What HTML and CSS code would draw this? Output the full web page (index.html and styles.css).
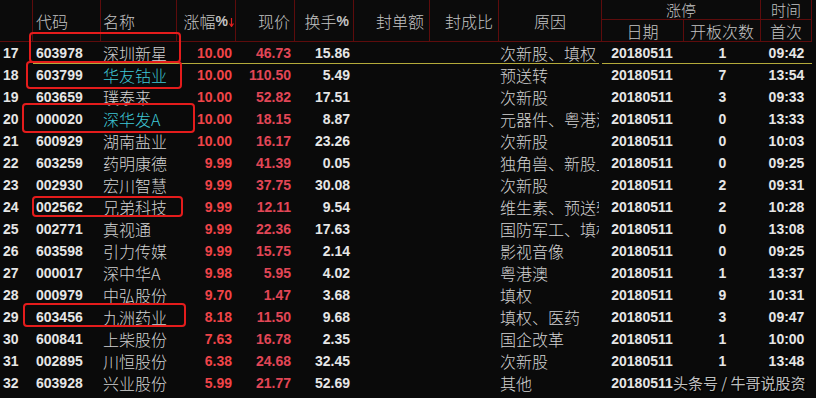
FILE: index.html
```html
<!DOCTYPE html>
<html lang="zh">
<head>
<meta charset="utf-8">
<title>涨停列表</title>
<link rel="stylesheet" href="styles.css">
</head>
<body>
<div class="board">
  <div class="head">
    <div class="h h-idx span2"></div>
    <div class="h h-left span2">代码</div>
    <div class="h h-left span2">名称</div>
    <div class="h h-right span2 sorted">涨幅<b>%</b><svg class="arrow" width="5" height="9" viewBox="0 0 5 9"><path d="M2.5 0V8M0.5 5.5L2.5 8.5L4.5 5.5" stroke="#e02020" stroke-width="1.2" fill="none"/></svg></div>
    <div class="h h-right span2 pr4">现价</div>
    <div class="h h-right span2 pr4">换手<b>%</b></div>
    <div class="h h-right span2 pr5">封单额</div>
    <div class="h h-right span2 pr5">封成比</div>
    <div class="h h-center span2">原因</div>
    <div class="h h-center group">涨停</div>
    <div class="h h-center top">时间</div>
    <div class="h h-center bottom">日期</div>
    <div class="h h-center bottom">开板次数</div>
    <div class="h h-center bottom">首次</div>
  </div>

  <div class="body">
    <div class="row sel"><span class="idx">17</span><span class="code">603978</span><span class="name">深圳新星</span><span class="pct">10.00</span><span class="price">46.73</span><span class="num">15.86</span><span></span><span></span><span class="why">次新股、填权</span><span class="date">20180511</span><span class="cnt">1</span><span class="time">09:42</span></div>
    <div class="row"><span class="idx">18</span><span class="code">603799</span><span class="name cyan">华友钴业</span><span class="pct">10.00</span><span class="price">110.50</span><span class="num">5.49</span><span></span><span></span><span class="why">预送转</span><span class="date">20180511</span><span class="cnt">7</span><span class="time">13:54</span></div>
    <div class="row"><span class="idx">19</span><span class="code">603659</span><span class="name">璞泰来</span><span class="pct">10.00</span><span class="price">52.82</span><span class="num">17.51</span><span></span><span></span><span class="why">次新股</span><span class="date">20180511</span><span class="cnt">3</span><span class="time">09:33</span></div>
    <div class="row"><span class="idx">20</span><span class="code">000020</span><span class="name cyan">深华发A</span><span class="pct">10.00</span><span class="price">18.15</span><span class="num">8.87</span><span></span><span></span><span class="why">元器件、粤港澳</span><span class="date">20180511</span><span class="cnt">0</span><span class="time">13:33</span></div>
    <div class="row"><span class="idx">21</span><span class="code">600929</span><span class="name">湖南盐业</span><span class="pct">10.00</span><span class="price">16.17</span><span class="num">23.26</span><span></span><span></span><span class="why">次新股</span><span class="date">20180511</span><span class="cnt">0</span><span class="time">10:03</span></div>
    <div class="row"><span class="idx">22</span><span class="code">603259</span><span class="name">药明康德</span><span class="pct">9.99</span><span class="price">41.39</span><span class="num">0.05</span><span></span><span></span><span class="why">独角兽、新股上市</span><span class="date">20180511</span><span class="cnt">0</span><span class="time">09:25</span></div>
    <div class="row"><span class="idx">23</span><span class="code">002930</span><span class="name">宏川智慧</span><span class="pct">9.99</span><span class="price">37.75</span><span class="num">30.08</span><span></span><span></span><span class="why">次新股</span><span class="date">20180511</span><span class="cnt">2</span><span class="time">09:31</span></div>
    <div class="row"><span class="idx">24</span><span class="code">002562</span><span class="name">兄弟科技</span><span class="pct">9.99</span><span class="price">12.11</span><span class="num">9.54</span><span></span><span></span><span class="why">维生素、预送转</span><span class="date">20180511</span><span class="cnt">2</span><span class="time">10:28</span></div>
    <div class="row"><span class="idx">25</span><span class="code">002771</span><span class="name">真视通</span><span class="pct">9.99</span><span class="price">22.36</span><span class="num">17.63</span><span></span><span></span><span class="why">国防军工、填权</span><span class="date">20180511</span><span class="cnt">0</span><span class="time">13:08</span></div>
    <div class="row"><span class="idx">26</span><span class="code">603598</span><span class="name">引力传媒</span><span class="pct">9.99</span><span class="price">15.75</span><span class="num">2.14</span><span></span><span></span><span class="why">影视音像</span><span class="date">20180511</span><span class="cnt">0</span><span class="time">09:25</span></div>
    <div class="row"><span class="idx">27</span><span class="code">000017</span><span class="name">深中华A</span><span class="pct">9.98</span><span class="price">5.95</span><span class="num">4.02</span><span></span><span></span><span class="why">粤港澳</span><span class="date">20180511</span><span class="cnt">1</span><span class="time">13:37</span></div>
    <div class="row"><span class="idx">28</span><span class="code">000979</span><span class="name">中弘股份</span><span class="pct">9.70</span><span class="price">1.47</span><span class="num">3.68</span><span></span><span></span><span class="why">填权</span><span class="date">20180511</span><span class="cnt">9</span><span class="time">10:31</span></div>
    <div class="row"><span class="idx">29</span><span class="code">603456</span><span class="name">九洲药业</span><span class="pct">8.18</span><span class="price">11.50</span><span class="num">9.68</span><span></span><span></span><span class="why">填权、医药</span><span class="date">20180511</span><span class="cnt">3</span><span class="time">09:47</span></div>
    <div class="row"><span class="idx">30</span><span class="code">600841</span><span class="name">上柴股份</span><span class="pct">7.63</span><span class="price">16.78</span><span class="num">2.35</span><span></span><span></span><span class="why">国企改革</span><span class="date">20180511</span><span class="cnt">1</span><span class="time">10:00</span></div>
    <div class="row"><span class="idx">31</span><span class="code">002895</span><span class="name">川恒股份</span><span class="pct">6.38</span><span class="price">24.68</span><span class="num">32.45</span><span></span><span></span><span class="why">次新股</span><span class="date">20180511</span><span class="cnt">1</span><span class="time">13:48</span></div>
    <div class="row"><span class="idx">32</span><span class="code">603928</span><span class="name">兴业股份</span><span class="pct">5.99</span><span class="price">21.77</span><span class="num">52.69</span><span></span><span></span><span class="why">其他</span><span class="date">20180511</span><span class="cnt"></span><span class="time"></span></div>
  </div>

  <div class="mark m1"></div>
  <div class="mark m2"></div>
  <div class="mark m3"></div>
  <div class="mark m4"></div>
  <div class="mark m5"></div>

  <div class="watermark">头条号 / 牛哥说股资</div>
</div>
</body>
</html>
```

FILE: styles.css
```css
* { box-sizing: border-box; }

html, body {
  margin: 0;
  padding: 0;
  background: #0a0a0a;
}

body {
  width: 816px;
  height: 398px;
  overflow: hidden;
  font-family: "Noto Sans CJK SC", "Liberation Sans", sans-serif;
}

.board {
  position: relative;
  width: 816px;
  height: 398px;
  background: #0a0a0a;
}

/* ---------- header ---------- */
.head {
  display: grid;
  grid-template-columns: 33px 68px 76px 59px 59px 59px 76px 69px 103px 82px 77px 51px;
  grid-template-rows: 20px 22px;
  height: 42px;
  background: #0b0b0b;
}

.h {
  color: #c4c4c4;
  font-size: 16px;
  font-weight: 300;
  line-height: 18px;
  border-right: 1px solid #5e0c0c;
  border-bottom: 1px solid #5e0c0c;
  display: flex;
  align-items: center;
  white-space: nowrap;
}

.h b {
  font-family: "Liberation Sans", sans-serif;
  font-weight: bold;
  font-size: 14px;
}

.span2 { grid-row: 1 / 3; padding-top: 1px; }
.h-left { padding-left: 3px; }
.h-left + .h-left { padding-left: 2px; }
.h-right { justify-content: flex-end; }
.h-center { justify-content: center; }
.sorted { padding-right: 1px; }
.pr4 { padding-right: 4px; }
.pr5 { padding-right: 5px; }
.arrow { margin-left: 1px; margin-top: 3px; }

.group { grid-column: 10 / 12; grid-row: 1; font-size: 15px; line-height: 16px; }
.top { grid-row: 1; font-size: 15px; line-height: 16px; }
.bottom { grid-row: 2; padding-top: 1px; }

/* ---------- body ---------- */
.row {
  display: grid;
  grid-template-columns: 33px 68px 76px 59px 59px 59px 76px 69px 103px 82px 77px 51px;
  height: 22px;
  line-height: 22px;
  white-space: nowrap;
}

.row > span { display: block; overflow: hidden; }

.sel > span:not(:first-child) { box-shadow: inset 0 -1px 0 #b4aa3a; }

.idx, .code, .pct, .price, .num, .date, .cnt, .time {
  font-family: "Liberation Sans", sans-serif;
  font-weight: bold;
  font-size: 14px;
  color: #e6e6e6;
}

.idx { padding-left: 3px; }
.code { padding-left: 3px; }

.name {
  padding-left: 2px;
  font-size: 16px;
  font-weight: 300;
  color: #d2d2d2;
}
.name.cyan { color: #3ec8d6; }

.pct { text-align: right; padding-right: 4px; color: #f04448; }
.price { text-align: right; padding-right: 4px; color: #e24656; }
.num { text-align: right; padding-right: 4px; }

.why {
  padding-left: 1px;
  margin-right: 3px;
  font-size: 16px;
  font-weight: 300;
  color: #d2d2d2;
}

.date { text-align: center; padding-right: 2px; }
.cnt { text-align: center; }
.time { text-align: center; }

/* ---------- hand-drawn annotation boxes ---------- */
.mark {
  position: absolute;
  border: 2px solid #e41c1c;
  border-radius: 4px;
}
.m1 { left: 29px; top: 32px; width: 152px; height: 31px; }
.m2 { left: 26px; top: 61px; width: 156px; height: 28px; }
.m3 { left: 22px; top: 103px; width: 173px; height: 30px; }
.m4 { left: 32px; top: 196px; width: 151px; height: 21px; }
.m5 { left: 23px; top: 303px; width: 163px; height: 24px; }

/* ---------- watermark ---------- */
.watermark {
  position: absolute;
  left: 673px;
  top: 372px;
  font-size: 15px;
  line-height: 22px;
  color: rgba(225, 225, 225, 0.85);
  text-shadow: 0 0 2px #000, 1px 1px 1px #000;
  white-space: nowrap;
}
```
